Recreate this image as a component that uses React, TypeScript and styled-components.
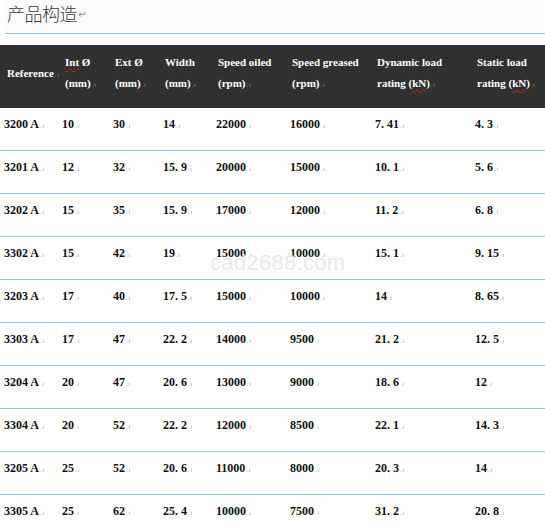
import React from "react";
import styled, { createGlobalStyle } from "styled-components";

const Global = createGlobalStyle`
  html, body { margin: 0; padding: 0; background: #fff; }
  body { font-family: "Liberation Serif", serif; overflow: hidden; }
`;

const Page = styled.div`
  position: relative;
  width: 545px;
  height: 526px;
  overflow: hidden;
`;

const TitleBar = styled.div`
  margin-left: 5px;
  height: 33px;
  background: #fbfbfb;
  border-bottom: 1px solid #a6bedd;
  display: flex;
  align-items: flex-start;
  padding-left: 2px;
`;

const Title = styled.span`
  font-family: "Noto Sans CJK SC", sans-serif;
  font-weight: 300;
  font-size: 18px;
  line-height: 26px;
  color: #3a3a3a;
  letter-spacing: -0.5px;
`;

const TitleMark = styled.span`
  font-family: "DejaVu Sans", sans-serif;
  font-size: 10px;
  color: #8a8a8a;
  margin-left: 1px;
  line-height: 30px;
`;

const Table = styled.div`
  margin-top: 11px;
`;

const cols = "58px 51px 50px 53px 74px 85px 100px 1fr";

const HeaderRow = styled.div`
  display: grid;
  grid-template-columns: ${cols};
  align-items: center;
  background: #303030;
  height: 63px;
  box-sizing: border-box;
  padding: 7px 0 14px 0;
`;

const HeadCell = styled.div<{ $shift?: number }>`
  padding-left: ${(p) => 7 + (p.$shift ?? 0)}px;
  color: #fff;
  font-family: "Liberation Serif", serif;
  font-weight: bold;
  font-size: 11px;
  line-height: 21px;
  white-space: nowrap;
`;

const Row = styled.div`
  display: grid;
  grid-template-columns: ${cols};
  height: 43px;
  box-sizing: border-box;
  border-bottom: 1px solid #9fc2e7;
  padding-top: 8px;
  align-items: start;
`;

const Cell = styled.div`
  padding-left: 4px;
  font-family: "Liberation Serif", serif;
  font-weight: bold;
  font-size: 12px;
  line-height: 16px;
  color: #111;
  white-space: nowrap;
`;

const Mark = styled.span<{ $dark?: boolean }>`
  font-family: "DejaVu Sans", sans-serif;
  font-weight: normal;
  font-size: 6px;
  color: ${(p) => (p.$dark ? "#9a9a9a" : "#9a9a9a")};
  margin-left: 1px;
  letter-spacing: 0.5px;
`;

const Squiggle = styled.span`
  text-decoration: underline wavy #d02020;
  text-decoration-thickness: 1px;
  text-underline-offset: 2px;
`;

const Watermark = styled.div`
  position: absolute;
  left: 210px;
  top: 250px;
  font-family: "Liberation Sans", sans-serif;
  font-size: 22px;
  color: #e9e9e9;
  pointer-events: none;
  letter-spacing: 0.3px;
`;

const rows: string[][] = [
  ["3200 A", "10", "30", "14", "22000", "16000", "7. 41", "4. 3"],
  ["3201 A", "12", "32", "15. 9", "20000", "15000", "10. 1", "5. 6"],
  ["3202 A", "15", "35", "15. 9", "17000", "12000", "11. 2", "6. 8"],
  ["3302 A", "15", "42", "19", "15000", "10000", "15. 1", "9. 15"],
  ["3203 A", "17", "40", "17. 5", "15000", "10000", "14", "8. 65"],
  ["3303 A", "17", "47", "22. 2", "14000", "9500", "21. 2", "12. 5"],
  ["3204 A", "20", "47", "20. 6", "13000", "9000", "18. 6", "12"],
  ["3304 A", "20", "52", "22. 2", "12000", "8500", "22. 1", "14. 3"],
  ["3205 A", "25", "52", "20. 6", "11000", "8000", "20. 3", "14"],
  ["3305 A", "25", "62", "25. 4", "10000", "7500", "31. 2", "20. 8"],
];

const M = () => <Mark>.ı</Mark>;

export default function App() {
  return (
    <Page>
      <Global />
      <TitleBar>
        <Title>产品构造</Title>
        <TitleMark>↵</TitleMark>
      </TitleBar>
      <Table>
        <HeaderRow>
          <HeadCell>
            Reference<M />
          </HeadCell>
          <HeadCell>
            <Squiggle>Int</Squiggle> Ø
            <br />
            (mm)<M />
          </HeadCell>
          <HeadCell $shift={-1}>
            Ext Ø
            <br />
            (mm)<M />
          </HeadCell>
          <HeadCell $shift={-1}>
            Width
            <br />
            (mm)<M />
          </HeadCell>
          <HeadCell $shift={-1}>
            Speed oiled
            <br />
            (rpm)<M />
          </HeadCell>
          <HeadCell $shift={-1}>
            Speed greased
            <br />
            (rpm)<M />
          </HeadCell>
          <HeadCell $shift={-1}>
            Dynamic load
            <br />
            rating (<Squiggle>kN</Squiggle>)<M />
          </HeadCell>
          <HeadCell $shift={-1}>
            Static load
            <br />
            rating (<Squiggle>kN</Squiggle>)<M />
          </HeadCell>
        </HeaderRow>
        {rows.map((r) => (
          <Row key={r[0]}>
            {r.map((c, i) => (
              <Cell key={i}>
                {c}
                <M />
              </Cell>
            ))}
          </Row>
        ))}
      </Table>
      <Watermark>cad2688.com</Watermark>
    </Page>
  );
}
